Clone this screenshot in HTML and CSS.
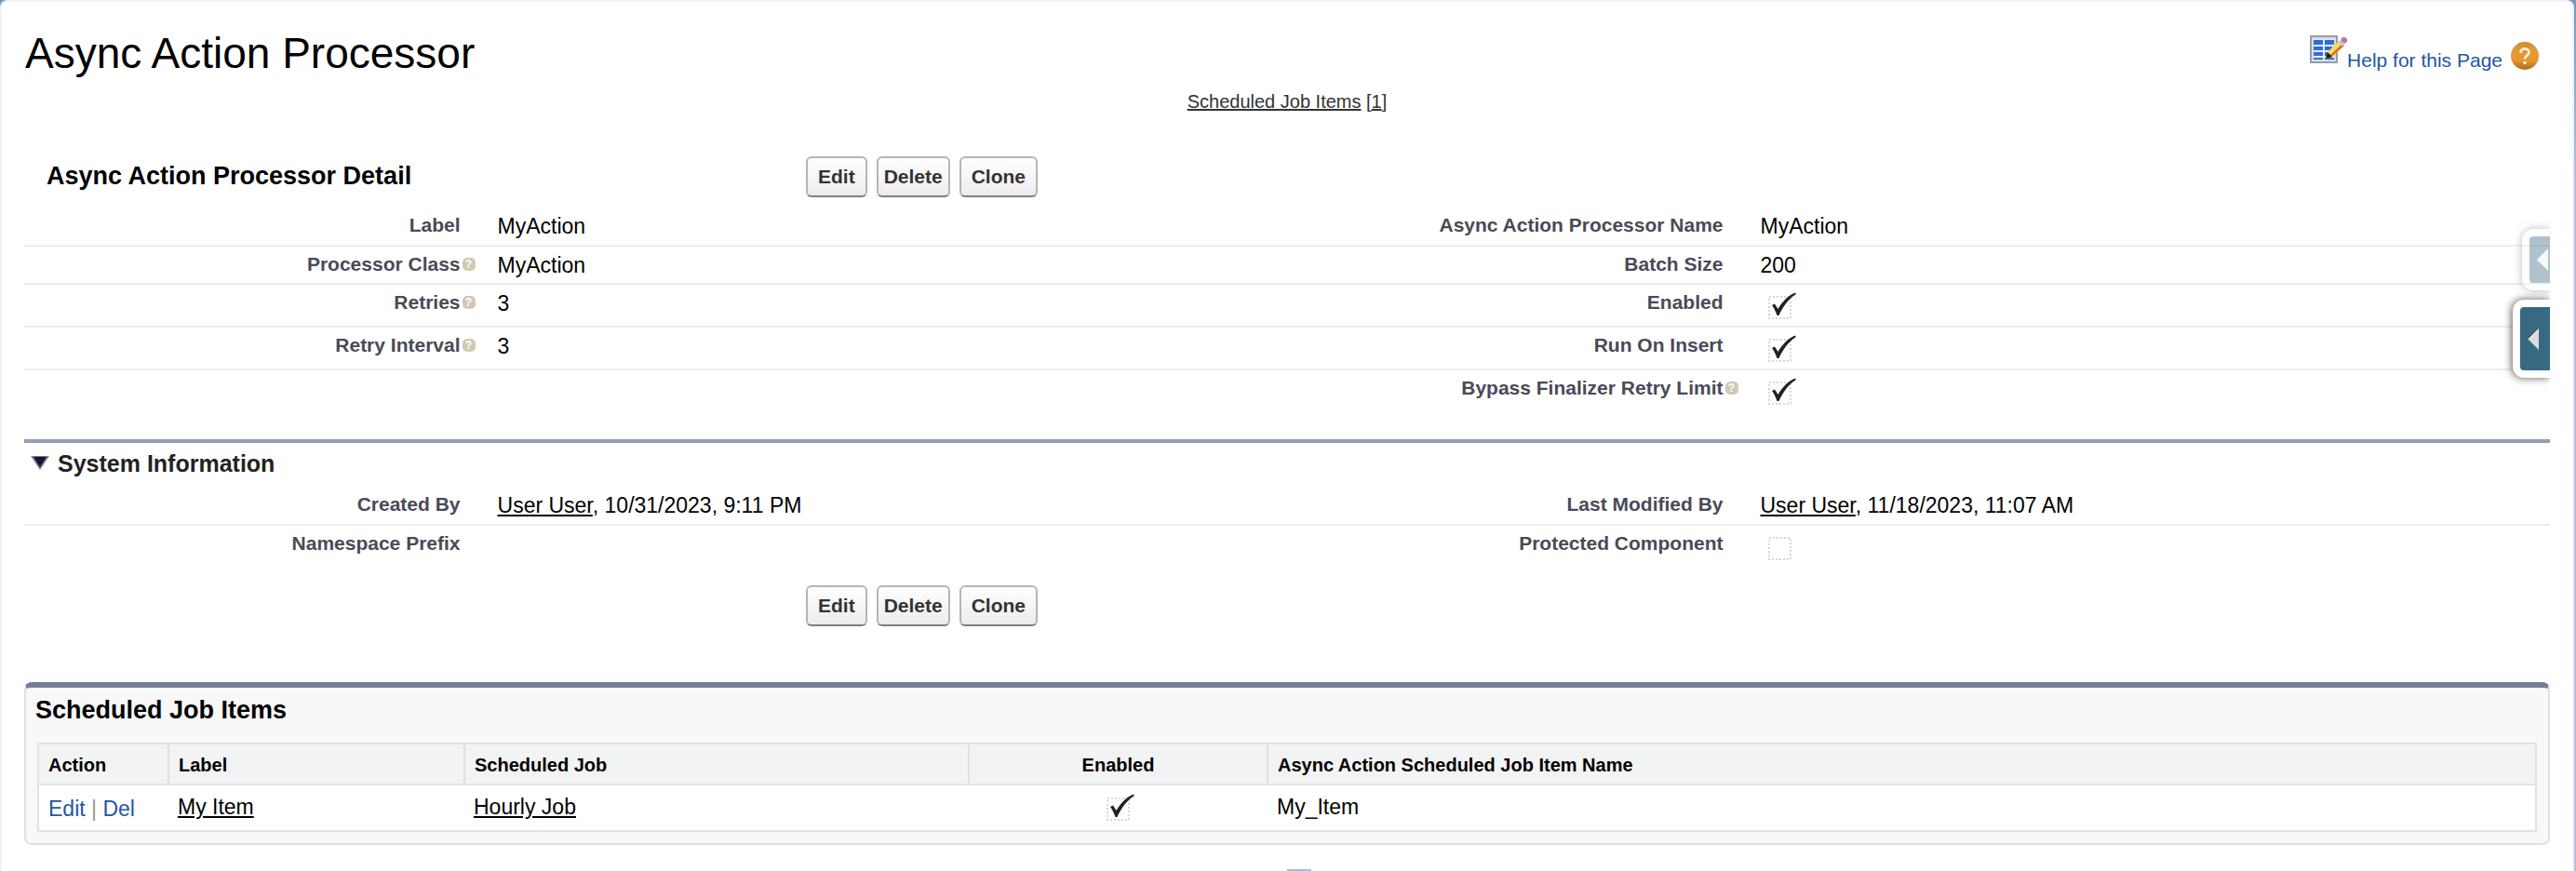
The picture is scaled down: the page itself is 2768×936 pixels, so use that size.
FILE: index.html
```html
<!DOCTYPE html>
<html lang="en">
<head>
<meta charset="utf-8">
<title>Async Action Processor</title>
<link rel="stylesheet" href="styles.css">
</head>
<body>
<main class="page">
  <header class="page-head">
    <h1 class="page-title">Async Action Processor</h1>
    <div class="help">
      <a class="help-layout" href="#layout" aria-label="Edit layout">
        <svg width="40" height="30" viewBox="0 0 40 30">
          <rect x="1" y="1" width="28" height="28" fill="#e3edfb" stroke="#9a9da3" stroke-width="2"/>
          <rect x="3" y="3" width="24" height="24" fill="none" stroke="#c9ccd2" stroke-width="1"/>
          <g fill="#2f6fd0"><path d="M4 5h10v5H4zM16 5h10v5H16zM4 12h10v4H4zM16 12h8v4h-8zM4 18h10v4H4zM16 18h4v4h-4zM4 24h10v2H4zM16 24h10v2H16z"/></g>
          <path d="M17 25l2-7L31 6l6 5-13 12z" fill="#f6c83c"/>
          <path d="M22 24L37 11l-3-3-14 13z" fill="#dd6a22"/>
          <path d="M19 19L31 7l3 3-12 11z" fill="#fbdc60"/>
          <path d="M17 25l2-7 5 5z" fill="#1d1a18"/>
          <path d="M30 7l3-2 4 4-2 3z" fill="#c9c9d4"/>
          <path d="M33 5l2-3h3l2 2v3l-3 2z" fill="#b87aa8"/>
        </svg></a>
      <a class="help-link" href="#help">Help for this Page</a>
      <a class="help-round" href="#help" aria-label="Help">
        <svg width="30" height="30" viewBox="0 0 30 30">
          <defs><linearGradient id="amber" x1="0" y1="0" x2="0" y2="1"><stop offset="0" stop-color="#c68b32"/><stop offset=".25" stop-color="#e09a3a"/><stop offset=".65" stop-color="#e8982e"/><stop offset="1" stop-color="#a56e1e"/></linearGradient></defs>
          <circle cx="15" cy="15" r="15" fill="url(#amber)"/>
          <path d="M10.500 12c0-3 2-4.500 4.500-4.500s4.500 1.500 4.500 4c0 3-4.500 3-4.500 7" fill="none" stroke="#fff3dc" stroke-width="2.500"/>
          <circle cx="15" cy="22.500" r="1.800" fill="#fff3dc"/>
        </svg></a>
    </div>
  </header>

  <nav class="jump"><a class="jump-link" href="#items">Scheduled Job Items</a> <span class="jump-count">[<a href="#items">1</a>]</span></nav>

  <section>
    <div class="detail-head">
      <h2 class="detail-title">Async Action Processor Detail</h2>
      <div class="buttons">
        <button class="btn">Edit</button>
        <button class="btn btn-tight">Delete</button>
        <button class="btn">Clone</button>
      </div>
    </div>

    <table class="fields">
      <tr><th scope="row">Label</th><td>MyAction</td><th scope="row">Async Action Processor Name</th><td>MyAction</td></tr>
      <tr><th scope="row">Processor Class<span class="hint">?</span></th><td>MyAction</td><th scope="row">Batch Size</th><td>200</td></tr>
      <tr><th scope="row">Retries<span class="hint">?</span></th><td>3</td><th scope="row"><label for="enabled">Enabled</label></th><td><input class="check" id="enabled" type="checkbox" checked disabled></td></tr>
      <tr><th scope="row">Retry Interval<span class="hint">?</span></th><td>3</td><th scope="row"><label for="insert">Run On Insert</label></th><td><input class="check" id="insert" type="checkbox" checked disabled></td></tr>
      <tr><th></th><td></td><th scope="row"><label for="bypass">Bypass Finalizer Retry Limit</label><span class="hint">?</span></th><td><input class="check" id="bypass" type="checkbox" checked disabled></td></tr>
    </table>

    <h3 class="section-title">
      <svg width="20" height="20" viewBox="0 0 20 20"><path d="M0 2h20L10 17z" fill="#7b7b9c"/><path d="M3 3h14l-7 11z" fill="#15152e"/></svg>
      System Information
    </h3>
    <table class="fields">
      <tr><th scope="row">Created By</th><td><a href="#user">User User</a>, 10/31/2023, 9:11 PM</td><th scope="row">Last Modified By</th><td><a href="#user">User User</a>, 11/18/2023, 11:07 AM</td></tr>
      <tr><th scope="row">Namespace Prefix</th><td></td><th scope="row"><label for="protected">Protected Component</label></th><td><input class="check" id="protected" type="checkbox" disabled></td></tr>
    </table>

    <div class="detail-foot">
      <div class="buttons">
        <button class="btn">Edit</button>
        <button class="btn btn-tight">Delete</button>
        <button class="btn">Clone</button>
      </div>
    </div>
  </section>

  <section class="related" id="items">
    <h2 class="related-title">Scheduled Job Items</h2>
    <table class="list">
      <colgroup><col class="c-action"><col class="c-label"><col class="c-job"><col class="c-enabled"><col></colgroup>
      <thead>
        <tr><th scope="col">Action</th><th scope="col">Label</th><th scope="col">Scheduled Job</th><th scope="col" class="mid">Enabled</th><th scope="col">Async Action Scheduled Job Item Name</th></tr>
      </thead>
      <tbody>
        <tr>
          <td class="actions"><a href="#edit">Edit</a> | <a href="#del">Del</a></td>
          <td><a href="#item">My Item</a></td>
          <td><a href="#job">Hourly Job</a></td>
          <td class="mid"><input class="check" type="checkbox" aria-label="Enabled" checked disabled></td>
          <td>My_Item</td>
        </tr>
      </tbody>
    </table>
  </section>
  <a class="to-top" href="#" aria-label="Back to top"></a>

  <button class="tab tab-faded" aria-label="Open panel"><svg width="14" height="26" viewBox="0 0 14 26"><path d="M1 13L13 1v24z" fill="#f0f0f0"/></svg></button>
  <button class="tab tab-main" aria-label="Open sidebar"><svg width="14" height="26" viewBox="0 0 14 26"><path d="M13 1v24L1 13z" fill="#dcdcdc"/><path d="M1 13L13 1" stroke="#1f3f50" stroke-width="1"/></svg></button>
</main>
</body>
</html>
```

FILE: styles.css
```css
* { box-sizing: border-box; }

body {
  margin: 0;
  height: 100vh;
  overflow: hidden;
  background: linear-gradient(#7698c8, #b3c0e0 200px);
  font-family: "Liberation Sans", Arial, Helvetica, sans-serif;
  font-size: 23px;
  line-height: 26px;
  color: #000;
}

h1, h2, h3 { margin: 0; }
a { color: inherit; }
button { font-family: inherit; }
svg { display: block; }

.page {
  position: relative;
  min-height: 100vh;
  margin-right: 2px;
  padding: 0 24px;
  background: #fff;
  border: 2px solid #f2f2f2;
  border-bottom: 0;
  border-radius: 8px 8px 0 0;
}

/* Page header */
.page-head {
  display: flex;
  justify-content: space-between;
  align-items: flex-start;
  height: 94px;
  padding-top: 30px;
}
.page-title { padding-left: 1px; font-size: 46px; line-height: 50px; font-weight: 400; }
.help {
  display: flex;
  align-items: flex-start;
  padding: 6px 12px 0 0;
  font-size: 21px;
  color: #1e58a4;
}
.help-link { padding-top: 14px; text-decoration: none; }
.help-round { padding: 7px 0 0 9px; }

.jump { text-align: center; font-size: 20px; color: #333; }

/* Record detail */
.detail-head { display: flex; align-items: center; margin-top: 46px; padding-left: 24px; }
.detail-title { width: 816px; padding-bottom: 2px; font-size: 27px; line-height: 30px; }
.buttons { display: flex; gap: 10px; }
.btn {
  height: 44px;
  padding: 0 11px;
  border: 2px solid #b5b5b5;
  border-bottom-color: #7f7f7f;
  border-radius: 6px;
  background: linear-gradient(#fff, #ececec);
  color: #333;
  font-size: 21px;
  font-weight: 700;
}
.btn-tight { padding: 0 6px; }

.fields { width: 100%; margin-top: 11px; border-collapse: collapse; table-layout: fixed; }
.fields tr + tr { border-top: 2px solid #ececec; }
.fields th, .fields td { height: 41px; padding: 7px 20px 5px; vertical-align: top; text-align: left; }
.fields th {
  position: relative;
  width: 18%;
  padding-left: 0;
  text-align: right;
  font-size: 21px;
  line-height: 24px;
  color: #4a4a56;
}
.fields td { width: 32%; }

.hint {
  position: absolute;
  right: 4px;
  top: 12px;
  width: 14px;
  height: 14px;
  border-radius: 5px;
  background: #d3c8b4;
  color: #fff;
  font-size: 12px;
  line-height: 14px;
  text-align: center;
}

.check {
  appearance: none;
  display: block;
  width: 42px;
  height: 32px;
  margin: 0;
  background: url("data:image/svg+xml,%3Csvg xmlns='http://www.w3.org/2000/svg' viewBox='2 0 42 32'%3E%3Crect x='11' y='6' width='23' height='23' fill='none' stroke='%23d6d6d6' stroke-width='2' stroke-dasharray='2 2'/%3E%3C/svg%3E");
}
.check:checked {
  background: url("data:image/svg+xml,%3Csvg xmlns='http://www.w3.org/2000/svg' viewBox='2 0 42 32'%3E%3Crect x='11' y='6' width='23' height='23' fill='none' stroke='%23d6d6d6' stroke-width='2' stroke-dasharray='2 2'/%3E%3Cpath d='M14 15L17 13.500 20.500 19C26 10 32 4 39.500 1.500L39.500 3.500C32 8 26 16 21.500 26L19.500 26C18 22 16.500 18 14 15z' fill='%23222'/%3E%3C/svg%3E");
}

.section-title {
  display: flex;
  align-items: center;
  gap: 9px;
  margin-top: 30px;
  padding: 8px 7px 0;
  border-top: 4px solid #939dbc;
  font-size: 25px;
  line-height: 28px;
  color: #222;
}

.detail-foot { margin-top: 20px; padding-left: 840px; }

/* Related list */
.related {
  margin-top: 60px;
  padding: 9px 12px 12px;
  border: 2px solid #e0e2e2;
  border-top: 6px solid #747e96;
  border-radius: 8px;
  background: #f8f8f8;
}
.related-title { margin-left: -2px; font-size: 27px; line-height: 30px; }
.list {
  width: 100%;
  margin-top: 20px;
  border: 2px solid #e0e2e2;
  border-collapse: collapse;
  table-layout: fixed;
  background: #fff;
}
.list th, .list td { padding: 8px 10px; text-align: left; vertical-align: top; }
.list th {
  height: 44px;
  padding-top: 10px;
  border: 2px solid #e0e2e2;
  background: #f2f3f3;
  font-size: 20px;
  line-height: 24px;
}
.list td { height: 50px; padding-top: 10px; }
.list td.mid { padding-top: 8px; padding-bottom: 8px; }
.list .mid { text-align: center; }
.list .check { margin: 0 auto; }
.list td.actions { padding-top: 12px; color: #999; }
.actions a { color: #1e58a4; text-decoration: none; }
.c-action { width: 140px; }
.c-label { width: 318px; }
.c-job { width: 542px; }
.c-enabled { width: 321px; }

.to-top {
  display: block;
  width: 26px;
  height: 26px;
  margin: 26px 0 0 50%;
  border: 2px solid #a9bbdc;
  background: #8ea9d6;
}

/* Sidebar handles over the right edge */
.tab {
  position: absolute;
  right: 24px;
  padding: 8px 0 8px 8px;
  border: 0;
  border-radius: 12px 0 0 12px;
  background: linear-gradient(#376a82, #376a82) content-box, #fff;
  clip-path: inset(-10px 0 -10px -10px);
}
.tab svg { margin-left: 7px; }
.tab-faded {
  top: 244px;
  width: 30px;
  height: 66px;
  opacity: .4;
  box-shadow: 0 0 8px #555;
}
.tab-main {
  top: 320px;
  width: 40px;
  height: 84px;
  box-shadow: -1px 0 8px #555;
}
```
